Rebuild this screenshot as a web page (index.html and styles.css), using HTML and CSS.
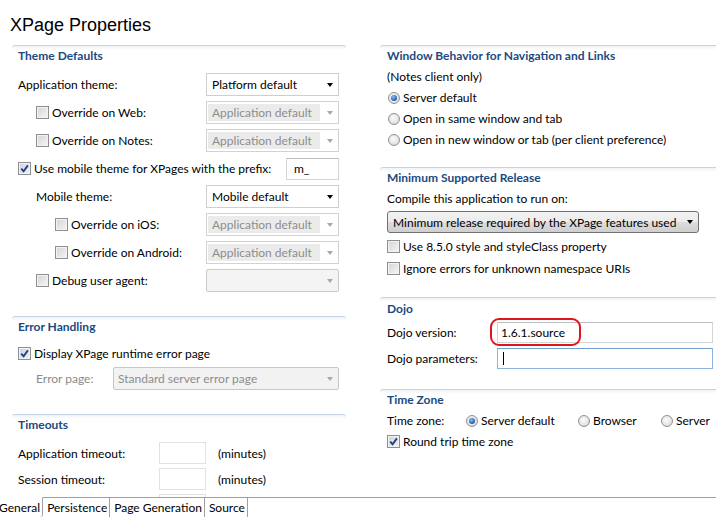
FILE: index.html
```html
<!DOCTYPE html>
<html>
<head>
<meta charset="utf-8">
<link rel="stylesheet" href="styles.css">
</head>
<body>
<div class="app">
  <div class="main">
    <h1 class="title">XPage Properties</h1>
    <div class="columns">
      <div class="col">
        <section class="sec sec-theme">
          <div class="sec-head">Theme Defaults</div>
          <div class="sec-body rows">
            <div class="row"><span class="label">Application theme:</span><div class="combo w133"><span class="val">Platform default</span><i class="arrow"></i></div></div>
            <div class="row ind1"><label class="chk label"><span class="box"></span>Override on Web:</label><div class="combo dis w133"><span class="val">Application default</span><i class="arrow"></i></div></div>
            <div class="row ind1"><label class="chk label"><span class="box"></span>Override on Notes:</label><div class="combo dis w133"><span class="val">Application default</span><i class="arrow"></i></div></div>
            <div class="row"><label class="chk label"><span class="box on"><svg viewBox="0 0 11 11" width="11" height="11"><path d="M2.2 5.6 L4.6 8.2 L8.9 2.4" fill="none" stroke="#2b3f78" stroke-width="1.9"/></svg></span>Use mobile theme for XPages with the prefix:</label><div class="input w53">m_</div></div>
            <div class="row ind1"><span class="label">Mobile theme:</span><div class="combo w133"><span class="val">Mobile default</span><i class="arrow"></i></div></div>
            <div class="row ind2"><label class="chk label"><span class="box"></span>Override on iOS:</label><div class="combo dis w133"><span class="val">Application default</span><i class="arrow"></i></div></div>
            <div class="row ind2"><label class="chk label"><span class="box"></span>Override on Android:</label><div class="combo dis w133"><span class="val">Application default</span><i class="arrow"></i></div></div>
            <div class="row ind1"><label class="chk label"><span class="box"></span>Debug user agent:</label><div class="combo empty w133"><i class="arrow"></i></div></div>
          </div>
        </section>
        <section class="sec sec-error">
          <div class="sec-head">Error Handling</div>
          <div class="sec-body">
            <div class="crow"><label class="chk"><span class="box on"><svg viewBox="0 0 11 11" width="11" height="11"><path d="M2.2 5.6 L4.6 8.2 L8.9 2.4" fill="none" stroke="#2b3f78" stroke-width="1.9"/></svg></span>Display XPage runtime error page</label></div>
            <div class="row ind1 errrow"><span class="label lw77 grey">Error page:</span><div class="combo full grow"><span class="val">Standard server error page</span><i class="arrow"></i></div></div>
          </div>
        </section>
        <section class="sec sec-time">
          <div class="sec-head">Timeouts</div>
          <div class="sec-body trows">
            <div class="trow"><span class="lw141">Application timeout:</span><div class="input w47 faint"></div><span class="unit">(minutes)</span></div>
            <div class="trow"><span class="lw141">Session timeout:</span><div class="input w47 faint"></div><span class="unit">(minutes)</span></div>
            <div class="trow"><span class="lw141"></span><div class="input w47 faint"></div></div>
          </div>
        </section>
      </div>
      <div class="col right">
        <section class="sec sec-win">
          <div class="sec-head">Window Behavior for Navigation and Links</div>
          <div class="sec-body">
            <div class="rrow">(Notes client only)</div>
            <div class="rrow"><span class="radio on"></span>Server default</div>
            <div class="rrow"><span class="radio"></span>Open in same window and tab</div>
            <div class="rrow"><span class="radio"></span>Open in new window or tab (per client preference)</div>
          </div>
        </section>
        <section class="sec sec-min">
          <div class="sec-head">Minimum Supported Release</div>
          <div class="sec-body">
            <div class="rrow">Compile this application to run on:</div>
            <div class="combo btn w312"><span class="val">Minimum release required by the XPage features used</span><i class="arrow"></i></div>
            <div class="cbrows">
              <div class="rrow"><label class="chk"><span class="box"></span>Use 8.5.0 style and styleClass property</label></div>
              <div class="rrow"><label class="chk"><span class="box"></span>Ignore errors for unknown namespace URIs</label></div>
            </div>
          </div>
        </section>
        <section class="sec sec-dojo">
          <div class="sec-head">Dojo</div>
          <div class="sec-body drows">
            <div class="drow"><span class="lw110">Dojo version:</span><div class="input w216">1.6.1.source</div><span class="mark"></span></div>
            <div class="drow"><span class="lw110">Dojo parameters:</span><div class="input w216 focus"><span class="caret"></span></div></div>
          </div>
        </section>
        <section class="sec sec-tz">
          <div class="sec-head">Time Zone</div>
          <div class="sec-body">
            <div class="rrow"><span class="lw78">Time zone:</span><span class="ropt w113"><span class="radio on"></span>Server default</span><span class="ropt w83"><span class="radio"></span>Browser</span><span class="ropt"><span class="radio"></span>Server</span></div>
            <div class="rrow"><label class="chk"><span class="box on"><svg viewBox="0 0 11 11" width="11" height="11"><path d="M2.2 5.6 L4.6 8.2 L8.9 2.4" fill="none" stroke="#2b3f78" stroke-width="1.9"/></svg></span>Round trip time zone</label></div>
          </div>
        </section>
      </div>
    </div>
  </div>
  <div class="tabs">
    <span class="tab sel">General</span>
    <span class="tab">Persistence</span>
    <span class="tab">Page Generation</span>
    <span class="tab">Source</span>
    <span class="tabfill"></span>
  </div>
</div>
</body>
</html>
```

FILE: styles.css
```css
* { box-sizing: border-box; }
html, body { margin: 0; padding: 0; background: #fff; }
body {
  width: 716px;
  height: 517px;
  overflow: hidden;
  font-family: Lato, "Open Sans", sans-serif;
  font-size: 12px;
  color: #000;
}
.app { display: flex; flex-direction: column; height: 517px; }
.main { flex: 1; overflow: hidden; }
.title {
  margin: 0;
  padding: 14px 0 9px 10px;
  font-family: "Liberation Sans", Arial, sans-serif;
  font-weight: normal;
  font-size: 18px;
  line-height: 22px;
  height: 45px;
}
.columns {
  display: grid;
  grid-template-columns: 334px 340px;
  column-gap: 34px;
  padding-left: 12px;
}
.col { display: flex; flex-direction: column; }

.sec {
  border-top: 1px solid #c4d4e5;
  border-radius: 3px 3px 0 0;
  background: linear-gradient(#eef3f9 0, #fff 4px);
}
.sec-head {
  font-weight: bold;
  color: #1a4a82;
  height: 19px;
  line-height: 19px;
  padding-left: 6px;
}
.right .sec-head { padding-left: 7px; height: 20px; line-height: 20px; }
.sec-body { padding: 8px 7px 0 6px; }
.right .sec-body { padding: 0 0 0 7px; }

.rows { display: flex; flex-direction: column; gap: 5px; }
.row { display: flex; align-items: center; height: 23px; }
.row.ind1 { padding-left: 18px; }
.row.ind2 { padding-left: 37px; }
.label { flex: 1; }
.grey { color: #8a8a8a; }

.chk { display: flex; align-items: center; white-space: nowrap; }
.box {
  width: 13px; height: 13px;
  border: 1px solid #8e8f8f;
  background: linear-gradient(135deg, #d4d4d4, #f6f6f6);
  box-shadow: inset 0 0 0 1px #f3f3f3;
  margin-right: 3px;
  flex: none;
  display: flex; align-items: center; justify-content: center;
}
.box.on { background: linear-gradient(135deg, #c9d4e2, #eef2f7); }
.box svg { display: block; }

.radio {
  width: 12px; height: 12px; border-radius: 50%;
  border: 1px solid #929292;
  background: radial-gradient(circle at 45% 40%, #fbfbfb 0, #e4e4e4 60%, #c9c9c9 100%);
  margin: 0 3px 0 1px;
  flex: none;
  position: relative;
}
.radio.on::after {
  content: "";
  position: absolute;
  left: 2px; top: 2px;
  width: 6px; height: 6px; border-radius: 50%;
  background: radial-gradient(circle at 40% 35%, #8fc3f2 0, #2a6fc0 55%, #163f7c 100%);
}

.combo {
  height: 23px;
  border: 1px solid #cfcfcf;
  background: #fff;
  display: flex; align-items: center;
  flex: none;
}
.combo .val { flex: 1; padding-left: 5px; white-space: nowrap; overflow: hidden; }
.arrow {
  width: 0; height: 0;
  border-left: 3.5px solid transparent;
  border-right: 3.5px solid transparent;
  border-top: 4px solid #000;
  margin-right: 5px;
  flex: none;
}
.combo.dis { border-color: #d2d2d2; }
.combo.dis .val {
  align-self: stretch;
  margin: 2px 7px 2px 1px;
  padding-left: 4px;
  line-height: 17px;
  background: #ebebeb;
  color: #8d8d8d;
}
.combo.dis .arrow, .combo.empty .arrow, .combo.full .arrow { border-top-color: #a8a8a8; }
.combo.empty { background: #f4f4f4; border-color: #cacaca; border-radius: 2px; justify-content: flex-end; }
.combo.full { background: #f2f2f2; border-color: #c8c8c8; border-radius: 2px; color: #8d8d8d; flex: 1; }
.combo.full .val { padding-left: 4px; }
.combo.btn {
  height: 22px;
  border: 1px solid #707070;
  border-radius: 3px;
  background: linear-gradient(#f2f2f2 0%, #ebebeb 50%, #dddddd 51%, #cfcfcf 100%);
  margin-top: 2px;
}
.w133 { width: 133px; }
.w312 { width: 312px; }

.input {
  height: 22px;
  border: 1px solid #d5d5d5;
  border-top-color: #bdbdbd;
  background: #fff;
  padding-left: 7px;
  line-height: 20px;
  flex: none;
}
.input.faint { border-color: #e2e2e2; }
.w53 { width: 53px; margin-left: auto; }
.w47 { width: 47px; }
.w216 { width: 216px; height: 21px; padding-left: 3px; line-height: 19px; }
.input.focus { border-color: #8cb4dc; border-top-color: #6f9fd0; position: relative; }
.caret {
  position: absolute; left: 5px; top: 3px;
  width: 1px; height: 13px; background: #000;
}

.crow { height: 20px; display: flex; align-items: center; }
.sec-error .sec-body { padding-top: 7px; }
.errrow { margin-top: 4px; }
.lw77 { width: 77px; flex: none; }
.sec-theme { margin-bottom: 24px; }
.sec-error { margin-bottom: 24px; }

.trows { display: flex; flex-direction: column; gap: 4px; }
.trow { display: flex; align-items: center; height: 22px; }
.lw141 { width: 141px; flex: none; }
.unit { margin-left: 12px; }

.rrow { height: 21px; display: flex; align-items: center; white-space: nowrap; }
.sec-win { margin-bottom: 17px; }
.sec-min .sec-head { height: 20px; }
.cbrows { margin-top: 3px; display: flex; flex-direction: column; gap: 1px; }
.sec-min { margin-bottom: 18px; }
.sec-dojo .sec-head { height: 21px; line-height: 21px; }
.drows { padding-top: 3px !important; display: flex; flex-direction: column; gap: 5px; }
.drow { display: flex; align-items: center; height: 21px; position: relative; }
.lw110 { width: 110px; flex: none; }
.mark {
  position: absolute;
  left: 103px; top: -4px;
  width: 91px; height: 28px;
  border: 2px solid #e0141b;
  border-radius: 9px;
}
.sec-dojo { margin-bottom: 20px; }
.lw78 { width: 78px; flex: none; }
.ropt { display: flex; align-items: center; }
.w113 { width: 112px; }
.w83 { width: 83px; }

.tabs {
  height: 20px;
  display: flex;
  margin-left: -5px;
  flex: none;
}
.tab {
  padding: 0 2px 0 4px;
  line-height: 19px;
  border-top: 1px solid #a0a0a0;
  border-right: 1px solid #a0a0a0;
  white-space: nowrap;
}
.tab.sel { border-top-color: transparent; border-bottom-right-radius: 3px; }
.tabfill { flex: 1; border-top: 1px solid #a0a0a0; }
```
